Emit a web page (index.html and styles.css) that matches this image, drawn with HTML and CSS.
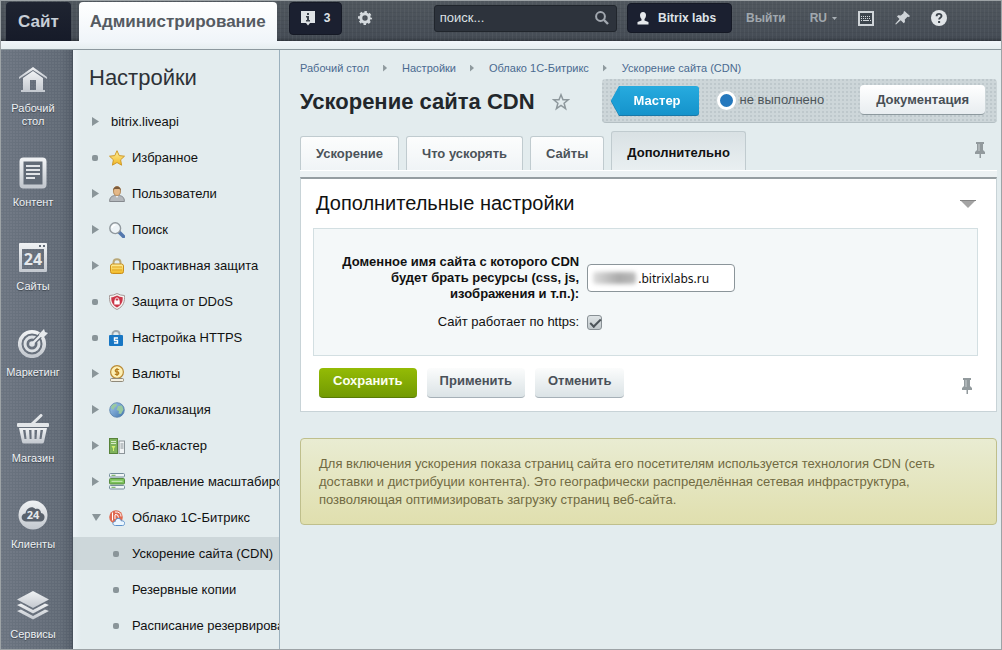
FILE: index.html
```
<!DOCTYPE html>
<html lang="ru">
<head>
<meta charset="utf-8">
<meta name="viewport" content="width=device-width, initial-scale=1">
<title>Ускорение сайта CDN</title>
<link rel="stylesheet" href="styles.css">
</head>
<body>
<svg class="defs" aria-hidden="true">
  <defs>
    <linearGradient id="metal" x1="0" y1="0" x2="0" y2="1"><stop offset="0" stop-color="#f0f2f4"/><stop offset="1" stop-color="#c3c8cf"/></linearGradient>
    <linearGradient id="gold" x1="0" y1="0" x2="0" y2="1"><stop offset="0" stop-color="#fff2a0"/><stop offset="1" stop-color="#f0b51f"/></linearGradient>
    <linearGradient id="globe" x1="0" y1="0" x2="1" y2="1"><stop offset="0" stop-color="#a8cbee"/><stop offset="1" stop-color="#3f74ad"/></linearGradient>
    <symbol id="pin" viewBox="0 0 10 17"><path d="M1 0h8v2H8v6l2 2v2H6v4H4.500v-4H0v-2l2-2V2H1z" fill="#929a9d"/><path d="M4 2v7" stroke="#c9cfd1"/></symbol>
  </defs>
</svg>
<header class="topbar">
  <nav class="modes">
    <a class="mode" href="#">Сайт</a>
    <a class="mode mode--active" href="#">Администрирование</a>
  </nav>
  <button class="dark-btn notices" type="button" aria-label="Уведомления">
    <svg width="14" height="15" viewBox="0 0 14 15"><path d="M0 0h14v12H9l-2 2.500L5 12H0z" fill="#dfe3e6"/><path d="M6 2h2v2H6zM5 5h3v4h1v1.500H5V9h1V6.500H5z" fill="#3c434c"/></svg>
    <span>3</span>
  </button>
  <button class="plain-btn gear" type="button" aria-label="Параметры">
    <svg width="14" height="14" viewBox="0 0 14 14"><circle cx="7" cy="7" r="4.200" fill="none" stroke="#d5dade" stroke-width="3"/><circle cx="7" cy="7" r="6" fill="none" stroke="#d5dade" stroke-width="2" stroke-dasharray="2.500 2.212" stroke-dashoffset="1.250"/></svg>
  </button>
  <form class="search">
    <input class="search-input" type="text" placeholder="поиск..." aria-label="Поиск">
    <button class="plain-btn" type="button" aria-label="Найти">
      <svg width="14" height="14" viewBox="0 0 14 14"><circle cx="5.500" cy="5.500" r="4.400" fill="none" stroke="#a2a8b0" stroke-width="2"/><path d="M9 9l4 4" stroke="#a2a8b0" stroke-width="2.400"/></svg>
    </button>
  </form>
  <a class="dark-btn user" href="#">
    <svg width="12" height="13" viewBox="0 0 12 13"><path d="M6 0c2 0 3 1.500 3 3.200C9 5 8 6.500 7.500 7v1.500L11.500 10v2.500H.5V10l4-1.500V7C4 6.500 3 5 3 3.200 3 1.500 4 0 6 0z" fill="#e6e9ec"/></svg>
    <span>Bitrix labs</span>
  </a>
  <a class="top-link" href="#">Выйти</a>
  <button class="plain-btn lang" type="button" aria-haspopup="true">RU
    <svg width="5" height="3" viewBox="0 0 5 3"><path d="M0 0h5L2.500 3z" fill="#a9b0b6"/></svg>
  </button>
  <div class="top-tools">
    <button class="plain-btn" type="button" aria-label="Горячие клавиши">
      <svg width="16" height="15" viewBox="0 0 16 15"><rect x="1" y="1" width="14" height="13" fill="#3d454d" stroke="#cfd4d8" stroke-width="2"/><path d="M3 5.500h10M3 7.500h10" stroke="#cfd4d8" stroke-dasharray="1 1"/><path d="M3 9.500h1m1 0h6m1 0h1" stroke="#cfd4d8"/></svg>
    </button>
    <button class="plain-btn" type="button" aria-label="Закрепить панель">
      <svg width="15" height="14" viewBox="0 0 15 14"><path d="M9.500 0L15 5l-1 1-1.500-.3L9.800 8.500l.2 2.500-1.300 1.200-3-2.900L1 13.600l-.8-.6L4.500 8 2 5.500 3.200 4.300l2.600.2L8.700 2 8.400.9z" fill="#cfd4d8"/></svg>
    </button>
    <button class="plain-btn" type="button" aria-label="Справка">
      <svg width="16" height="16" viewBox="0 0 16 16"><circle cx="8" cy="8" r="8" fill="#e1e5e8"/><path d="M5.600 6.200C5.600 3 10.500 3.200 10.500 6c0 1.800-2.400 1.800-2.400 3.600" fill="none" stroke="#3b434b" stroke-width="1.900"/><rect x="7.100" y="11" width="2" height="2" fill="#3b434b"/></svg>
    </button>
  </div>
</header>
<div class="workspace">
  <nav class="rail">
    <a class="rail-item rail-item--first" href="#"><span class="rail-icon">
      <svg width="30" height="27" viewBox="0 0 30 27"><path d="M1 13v-2L15 1l14 10v2L15 4z" fill="url(#metal)"/><path fill-rule="evenodd" d="M15 5l10 7v12h2v2H3v-2h2V12zM12 14v10h6V14z" fill="url(#metal)"/></svg></span>Рабочий<br>стол</a>
    <a class="rail-item rail-item--short" href="#"><span class="rail-icon">
      <svg width="28" height="32" viewBox="0 0 28 32"><rect x="2.500" y="2.500" width="23" height="27" rx="2" fill="#626b77" stroke="url(#metal)" stroke-width="4"/><path d="M7 9h14M7 13h14M7 17h14M7 21h9" stroke="#e1e4e8" stroke-width="2"/></svg></span>Контент</a>
    <a class="rail-item" href="#"><span class="rail-icon">
      <svg width="28" height="29" viewBox="0 0 28 29"><path fill-rule="evenodd" d="M1 0h26q1 0 1 1v27q0 1-1 1H1q-1 0-1-1V1q0-1 1-1zM3 6v20h22V6z" fill="url(#metal)"/><path d="M20 2h2v2h-2zM24 2h2v2h-2z" fill="#626b77"/><text class="icon-num" x="14" y="22" font-size="16">24</text></svg></span>Сайты</a>
    <a class="rail-item" href="#"><span class="rail-icon">
      <svg width="30" height="30" viewBox="0 0 30 30"><circle cx="14" cy="16" r="12.300" fill="none" stroke="url(#metal)" stroke-width="3.600"/><circle cx="14" cy="16" r="7" fill="none" stroke="#dde1e5" stroke-width="3"/><circle cx="14" cy="16" r="2.800" fill="#dde1e5"/><path d="M17 13L26 4" stroke="#626b77" stroke-width="5"/><path d="M14 16l9-9" stroke="#e6e9ec" stroke-width="2.400"/><path d="M21 6l5-5 1 3 3 1-5 5-3-1z" fill="#e6e9ec"/></svg></span>Маркетинг</a>
    <a class="rail-item" href="#"><span class="rail-icon">
      <svg width="32" height="30" viewBox="0 0 32 30"><path d="M15 10l9-8.500" stroke="#e3e6e9" stroke-width="3" stroke-linecap="round"/><rect x="0" y="9" width="32" height="4" rx="1" fill="#e3e6e9"/><path fill-rule="evenodd" d="M2 14h28l-3 14q-.4 1.500-2 1.500H7q-1.600 0-2-1.500zM6 16l1.500 9h2L8.500 16zM12 16l.6 9h2L14.500 16zM17.500 16v9h2l.6-9zM23.500 16l-1 9h2L26 16z" fill="url(#metal)"/></svg></span>Магазин</a>
    <a class="rail-item rail-item--tall" href="#"><span class="rail-icon">
      <svg width="30" height="30" viewBox="0 0 30 30"><circle cx="15" cy="15" r="14.500" fill="url(#metal)"/><path d="M8 21.500c-6-.5-5.500-8-.5-8C8 8 14 5 17.500 9c3.500-1 5.500 1.500 5.500 4 5 .5 4.500 8 0 8.500z" fill="#59616c"/><text class="icon-num" x="15" y="19" font-size="11">24</text></svg></span>Клиенты</a>
    <a class="rail-item" href="#"><span class="rail-icon">
      <svg width="32" height="29" viewBox="0 0 32 29"><path d="M16 0l16 8.500L16 17 0 8.500z" fill="url(#metal)"/><path d="M0 14l4-1.500L16 19l12-6.500 4 1.500-16 8.500zM0 20l4-1.500L16 25l12-6.500 4 1.500-16 8.500z" fill="url(#metal)"/></svg></span>Сервисы</a>
  </nav>
  <aside class="menu">
    <h2 class="menu-title">Настройки</h2>
    <ul class="menu-list">
      <li><a class="menu-item" href="#"><i class="mark mark--right"></i><span class="menu-text--plain">bitrix.liveapi</span></a></li>
      <li><a class="menu-item" href="#"><i class="mark mark--dot"></i><svg class="menu-icon" viewBox="0 0 16 16"><path d="M8 .7l2.200 4.900 5.300.6-3.900 3.600 1 5.400L8 12.500l-4.600 2.700 1-5.400L.5 6.200l5.300-.6z" fill="url(#gold)" stroke="#cf9a2b"/></svg><span>Избранное</span></a></li>
      <li><a class="menu-item" href="#"><i class="mark mark--right"></i><svg class="menu-icon" viewBox="0 0 16 16"><path d="M.6 15.500c0-4 2-5.500 5-6h4.800c3 .5 5 2 5 6z" fill="#b4b8bc" stroke="#85898e"/><path d="M6 8.500L8 12l2-3.500z" fill="#f5f5f5"/><ellipse cx="8" cy="5" rx="3.500" ry="4.500" fill="#e4b888" stroke="#a67946" stroke-width=".8"/><path d="M4.300 4.500C3.800-.8 12.200-.8 11.700 4.500L10.500 3h-5z" fill="#7b5b3c"/></svg><span>Пользователи</span></a></li>
      <li><a class="menu-item" href="#"><i class="mark mark--right"></i><svg class="menu-icon" viewBox="0 0 16 16"><path d="M10 10l4.500 4.500" stroke="#5478ae" stroke-width="3.600" stroke-linecap="round"/><circle cx="6.200" cy="6.200" r="5.400" fill="#eef4f7" stroke="#91999e" stroke-width="1.400"/><path d="M3 6q.5-3 3.500-3" stroke="#fff" fill="none" stroke-width="1.500"/></svg><span>Поиск</span></a></li>
      <li><a class="menu-item" href="#"><i class="mark mark--right"></i><svg class="menu-icon" viewBox="0 0 16 16"><path d="M4.500 7V4.500C4.500 0 11.500 0 11.500 4.500V7" fill="none" stroke="#b9a878" stroke-width="2"/><rect x="1.500" y="6" width="13" height="9.500" rx="2" fill="url(#gold)" stroke="#c98e1c"/><path d="M3 9h10M3 12h10" stroke="#e2a21b"/></svg><span>Проактивная защита</span></a></li>
      <li><a class="menu-item" href="#"><i class="mark mark--dot"></i><svg class="menu-icon menu-icon--tall" viewBox="0 0 16 17"><path d="M8 .5q3.500 2 7.500 2c.3 6-.8 11-7.500 14C1.300 13.500.2 8.500.5 2.500Q4.500 2.500 8 .5z" fill="#f6f1ef" stroke="#a69998"/><path d="M8 2.500q2.500 1.500 5.700 1.800c.2 4.500-1 7.700-5.700 10.200C3.300 12 2.100 8.800 2.300 4.300 5.500 4 8 2.500 8 2.500z" fill="#cb3648"/><path d="M6.300 8V6.500c0-2 3.400-2 3.400 0V8" fill="none" stroke="#fff"/><rect x="5.300" y="7.500" width="5.400" height="4" fill="#fff"/></svg><span>Защита от DDoS</span></a></li>
      <li><a class="menu-item" href="#"><i class="mark mark--dot"></i><svg class="menu-icon menu-icon--narrow" viewBox="0 0 14 16"><path d="M3.500 6V4C3.500 0 10.500 0 10.500 4v2" fill="none" stroke="#9da7ad" stroke-width="1.800"/><rect x="0" y="5" width="14" height="11" rx="1" fill="#1877c4"/><path d="M9 8H5.500v2.500h3V13H5" fill="none" stroke="#fff" stroke-width="1.400"/></svg><span>Настройка HTTPS</span></a></li>
      <li><a class="menu-item" href="#"><i class="mark mark--right"></i><svg class="menu-icon menu-icon--tall" viewBox="0 0 16 17"><circle cx="8" cy="7" r="6.400" fill="#fdf0b5" stroke="#b98a35" stroke-width="1.200"/><path d="M10.200 4.500H7q-1.500 1.200 0 2.400h2q1.500 1.300 0 2.500H5.800M8 3v8" fill="none" stroke="#b57b1a" stroke-width="1.200"/><rect x="1.500" y="13.500" width="13" height="3" rx="1" fill="#f4efdf" stroke="#8f8979"/></svg><span>Валюты</span></a></li>
      <li><a class="menu-item" href="#"><i class="mark mark--right"></i><svg class="menu-icon" viewBox="0 0 16 16"><circle cx="8" cy="8" r="7.300" fill="url(#globe)" stroke="#567fa9" stroke-width=".8"/><path d="M3 3l4-1.500 1 2L5 6l-.5 2L2 6zM9 4l4-.5 1.500 4L12 12l-2.500-.5L10 9 7.500 8z" fill="#98c9a0"/></svg><span>Локализация</span></a></li>
      <li><a class="menu-item" href="#"><i class="mark mark--right"></i><svg class="menu-icon" viewBox="0 0 16 16"><rect x=".5" y=".5" width="8" height="15" fill="#7fb25c" stroke="#578339"/><path d="M2 3.500h5M2 5.500h5" stroke="#d7eac8"/><path d="M2.500 8h4L5 10.500V13H4v-2.500z" fill="#d4f06c"/><rect x="10" y="3" width="5.500" height="12.500" fill="#f0f3f4" stroke="#8b9498"/><path d="M11.500 6h3M11.500 8h3M11.500 10h3" stroke="#8b9498"/></svg><span>Веб-кластер</span></a></li>
      <li><a class="menu-item" href="#"><i class="mark mark--right"></i><svg class="menu-icon menu-icon--tall" viewBox="0 0 16 17"><rect x=".5" y=".5" width="15" height="3.500" rx="1" fill="#f1f6f7" stroke="#748d9b"/><rect x=".5" y="5.500" width="15" height="5.500" rx="1" fill="#7cc35a" stroke="#598c42"/><rect x=".5" y="12.500" width="15" height="3.500" rx="1" fill="#f1f6f7" stroke="#748d9b"/><path d="M2.500 2.300h4M2.500 14.300h4" stroke="#6caa53"/><path d="M2.500 8.300h11" stroke="#d3efc3"/></svg><span>Управление масштабированием</span></a></li>
      <li><a class="menu-item" href="#"><i class="mark mark--down"></i><svg class="menu-icon" viewBox="0 0 16 16"><circle cx="7" cy="7" r="6.800" fill="#e06a50"/><path d="M3.500 2.500v8M6 5v4M6 4.500q3.500-.5 3.500 3M6 2q6-.5 6 4.500" fill="none" stroke="#fff"/><path d="M6.500 15.500c-3.500 0-3.300-4-.3-4 .3-4 5.300-4 6-.7 4.500-.3 4.300 4.700 1.300 4.700z" fill="#eaf6ff" stroke="#5c91ca"/></svg><span>Облако 1С-Битрикс</span></a></li>
      <li><a class="menu-item menu-item--sub menu-item--current" href="#"><i class="mark mark--dot"></i><span>Ускорение сайта (CDN)</span></a></li>
      <li><a class="menu-item menu-item--sub" href="#"><i class="mark mark--dot"></i><span>Резервные копии</span></a></li>
      <li><a class="menu-item menu-item--sub" href="#"><i class="mark mark--dot"></i><span>Расписание резервирования</span></a></li>
    </ul>
  </aside>
  <main class="content">
    <nav class="crumbs">
      <a href="#">Рабочий стол</a><i class="crumb-sep"></i><a href="#">Настройки</a><i class="crumb-sep"></i><a href="#">Облако 1С-Битрикс</a><i class="crumb-sep"></i><a href="#">Ускорение сайта (CDN)</a>
    </nav>
    <div class="heading">
      <h1 class="page-title">Ускорение сайта CDN</h1>
      <button class="plain-btn fav" type="button" aria-label="Добавить в избранное">
        <svg width="18" height="18" viewBox="0 0 18 18"><path d="M9 1.800l2 5h5.200l-4.100 3.400 1.500 5.500L9 12.500l-4.600 3.200 1.500-5.500L1.800 6.800H7z" fill="none" stroke="#8e989c" stroke-width="1.500"/></svg>
      </button>
      <div class="wizard">
        <a class="wizard-btn" href="#"><svg width="9" height="29" viewBox="0 0 9 29"><path d="M9 0H8L0 14.500 8 29h1z" fill="#1c9fd6"/></svg><span>Мастер</span></a>
        <label class="status"><input class="status-radio" type="radio" checked>не выполнено</label>
        <a class="doc-btn" href="#">Документация</a>
      </div>
    </div>
    <div class="tabs">
      <button class="tab" type="button">Ускорение</button>
      <button class="tab" type="button">Что ускорять</button>
      <button class="tab" type="button">Сайты</button>
      <button class="tab tab--active" type="button">Дополнительно</button>
      <button class="plain-btn tabs-pin" type="button" aria-label="Закрепить вкладки"><svg width="10" height="17"><use href="#pin"/></svg></button>
    </div>
    <form class="card">
      <div class="card-head">
        <h2 class="card-title">Дополнительные настройки</h2>
        <button class="plain-btn" type="button" aria-label="Свернуть"><svg width="16" height="8" viewBox="0 0 16 8"><path d="M0 0h16L8 8z" fill="#a4a4a4"/><path d="M0 .5h16" stroke="#858585"/></svg></button>
      </div>
      <div class="fields">
        <label class="field-label field-label--strong" for="domain">Доменное имя сайта с которого CDN будет брать ресурсы (css, js, изображения и т.п.):</label>
        <div class="domain"><input class="domain-input" id="domain" type="text" value=".bitrixlabs.ru"><span class="smudge"></span></div>
        <label class="field-label" for="https">Сайт работает по https:</label>
        <input class="check" id="https" type="checkbox" checked>
      </div>
      <div class="actions">
        <button class="btn btn--save" type="button">Сохранить</button>
        <button class="btn" type="button">Применить</button>
        <button class="btn" type="button">Отменить</button>
        <button class="plain-btn actions-pin" type="button" aria-label="Закрепить кнопки"><svg width="10" height="17"><use href="#pin"/></svg></button>
      </div>
    </form>
    <p class="note">Для включения ускорения показа страниц сайта его посетителям используется технология CDN (сеть доставки и дистрибуции контента). Это географически распределённая сетевая инфраструктура, позволяющая оптимизировать загрузку страниц веб-сайта.</p>
  </main>
</div>
</body>
</html>
```
FILE: styles.css
```
* { box-sizing: border-box; }
body {
  margin: 0;
  height: 100vh;
  display: flex;
  flex-direction: column;
  overflow: hidden;
  border: 1px solid #9da3a6;
  background: #e3ecee;
  color: #111;
  font: 13px/16px "Liberation Sans", Arial, sans-serif;
}
a { color: inherit; text-decoration: none; }
button, input { font: inherit; }
svg { display: block; flex: none; }
.defs { position: absolute; width: 0; height: 0; }
.plain-btn { padding: 0; border: 0; background: none; color: inherit; cursor: pointer; }

/* Top bar */
.topbar {
  flex: none;
  display: flex;
  align-items: center;
  height: 49px;
  padding: 0 54px 14px 5px;
  border-bottom: 1px solid #8c989e;
  background:
    linear-gradient(#f1f6fa, #e6eef0) bottom / 100% 8px no-repeat,
    repeating-linear-gradient(90deg, transparent 0 3px, rgba(255, 255, 255, 0.04) 3px 4px),
    repeating-linear-gradient(transparent 0 3px, rgba(0, 0, 0, 0.05) 3px 4px),
    linear-gradient(#50575e, #464d56 36px, #32383f 40px);
}
.modes { display: flex; align-self: stretch; gap: 8px; margin-bottom: -6px; padding-top: 1px; font-size: 17px; font-weight: bold; }
.mode {
  display: flex;
  align-items: center;
  padding: 0 12px;
  border-radius: 4px 4px 0 0;
  background: linear-gradient(#1f2431, #161b29);
  color: #c8cfd7;
}
.mode--active { padding: 0 11px; background: linear-gradient(#fff, #f0f5f9); color: #555b62; }
.dark-btn {
  flex: none;
  display: flex;
  align-items: center;
  height: 30px;
  border: 1px solid #151925;
  border-radius: 4px;
  background: #1b2030;
  color: #dfe3e8;
  font-size: 12px;
  font-weight: bold;
  white-space: nowrap;
}
.notices { gap: 9px; width: 53px; height: 33px; margin-left: 12px; padding: 0 11px; }
.gear { margin-left: 16px; }
.search {
  flex: 1;
  min-width: 0;
  display: flex;
  align-items: center;
  height: 27px;
  margin-left: 62px;
  padding: 0 7px 0 5px;
  border: 1px solid #20252c;
  border-radius: 3px;
  background: #2d333c;
}
.search-input { flex: 1; min-width: 0; padding: 0; border: 0; background: none; color: #dde1e5; font-size: 13px; outline: 0; }
.search-input::placeholder { color: #dde1e5; opacity: 1; }
.user { gap: 9px; margin-left: 10px; padding: 0 15px 0 9px; }
.top-link { margin-left: 14px; color: #a1a8ae; font-size: 12px; font-weight: bold; }
.lang { display: flex; align-items: center; gap: 5px; margin-left: 24px; color: #a1a8ae; font-size: 12px; font-weight: bold; }
.top-tools { display: flex; align-items: center; gap: 21px; margin-left: 21px; }

/* Columns */
.workspace { flex: 1; min-height: 0; display: flex; }
.rail {
  flex: none;
  width: 72px;
  padding-top: 13px;
  background:
    radial-gradient(circle at 1px 1px, rgba(255, 255, 255, 0.05) 1px, transparent 1px) 0 0 / 3px 3px,
    linear-gradient(90deg, #6b7480, #606975 60px, #555e6a 70px, #464e59);
  color: #eef1f4;
  font-size: 11px;
  line-height: 13px;
  text-align: center;
  text-shadow: 0 1px 1px #3d444d;
  overflow: hidden;
}
.rail-item { display: block; min-height: 86px; padding-right: 8px; }
.rail-item--first { min-height: 94px; }
.rail-item--short { min-height: 84px; }
.rail-item--tall { min-height: 90px; }
.rail-icon { display: flex; align-items: center; justify-content: center; height: 32px; margin-bottom: 7px; }
.icon-num { fill: #e6e9ec; font-family: "Open Sans", sans-serif; font-weight: bold; text-anchor: middle; text-shadow: none; }

.menu {
  flex: none;
  width: 207px;
  padding-top: 16px;
  border-right: 1px solid #9bb0bd;
  background: linear-gradient(90deg, #edf3f7, #e3ecee 8px);
  overflow: hidden;
}
.menu-title { margin: 0 0 15px 16px; color: #2d3237; font-size: 22px; font-weight: normal; line-height: 24px; }
.menu-list { display: flex; flex-direction: column; gap: 3px; margin: 0; padding: 0; list-style: none; }
.menu-item { display: flex; align-items: center; height: 33px; padding-left: 19px; white-space: nowrap; }
.menu-item--sub { padding-left: 40px; }
.menu-item--current { background: #cdd7da; }
.menu-icon { width: 16px; height: 16px; margin-right: 7px; }
.menu-icon--tall { height: 17px; }
.menu-icon--narrow { width: 14px; margin-right: 9px; }
.menu-text--plain { padding-left: 2px; }
.mark { flex: none; width: 17px; height: 7px; background: #8a9599; }
.mark--right { clip-path: polygon(0 0, 7px 50%, 0 100%); height: 9px; }
.mark--down { clip-path: polygon(0 0, 9px 0, 4px 100%); }
.mark--dot { width: 6px; height: 6px; margin-right: 11px; border-radius: 2px; }
.menu-item--sub .mark { margin-right: 13px; }

.content { flex: 1; min-width: 0; padding: 11px 4px 0 20px; }
.crumbs { display: flex; align-items: center; height: 14px; color: #4a6a90; font-size: 11px; line-height: 14px; white-space: nowrap; }
.crumb-sep { width: 4px; height: 7px; margin: 0 15px 0 14px; background: #8f9a9e; clip-path: polygon(0 0, 100% 50%, 0 100%); }

.heading { display: flex; align-items: center; margin-top: 4px; }
.page-title { margin: 0; padding-top: 2px; color: #22272b; font-size: 22px; line-height: 26px; white-space: nowrap; }
.fav { margin-left: 17px; padding-top: 2px; }
.wizard {
  flex: 1;
  display: flex;
  align-items: center;
  height: 44px;
  margin-left: 32px;
  padding: 0 12px 1px 9px;
  border-bottom: 1px solid #b4bfc3;
  border-radius: 4px;
  background: radial-gradient(circle at 1px 1px, #bec8cc 1px, transparent 1px) 0 0 / 4px 4px, #cdd6d9;
}
.wizard-btn { display: flex; height: 29px; color: #fff; font-weight: bold; line-height: 29px; filter: drop-shadow(0 1px 0 #1878a8); }
.wizard-btn span { padding: 0 18px 0 14px; border-radius: 0 3px 3px 0; background: linear-gradient(#27abdf, #1593cb); }
.status { display: flex; align-items: center; gap: 4px; margin-left: 18px; color: #4d5559; white-space: nowrap; }
.status-radio { appearance: none; width: 19px; height: 19px; margin: 0; border: 3px solid #fff; border-radius: 50%; background: #2478bd; }
.doc-btn {
  height: 30px;
  margin-left: auto;
  padding: 0 16px;
  border-bottom: 1px solid #8d999e;
  border-radius: 4px;
  background: linear-gradient(#fff, #e8edf0);
  color: #484f55;
  font-weight: bold;
  line-height: 29px;
}

/* Tabs */
.tabs {
  display: flex;
  align-items: flex-end;
  gap: 7px;
  height: 54px;
  padding-bottom: 7px;
  background: linear-gradient(#fff 0 1px, #ecf1f3 1px) bottom / 100% 7px no-repeat;
}
.tab {
  height: 34px;
  padding: 0 15px;
  border: 1px solid #c0cbcf;
  border-bottom: 0;
  border-radius: 3px 3px 0 0;
  background: linear-gradient(#fcfdfd, #f0f4f6);
  color: #4b5359;
  font-weight: bold;
  cursor: pointer;
}
.tab--active { height: 39px; padding-top: 4px; background: linear-gradient(#d9e1e4, #e9eff1); color: #111; }
.tabs-pin { margin-left: auto; padding: 0 12px 11px 0; }

/* Form card */
.card { border: 1px solid #c8d3d7; border-top: 2px solid #959da1; background: #fff; }
.card-head { display: flex; align-items: center; justify-content: space-between; height: 49px; padding: 0 20px 0 15px; }
.card-title { margin: 0; padding-bottom: 2px; color: #111; font-size: 20px; font-weight: normal; }
.fields {
  display: grid;
  grid-template-columns: 40% 1fr;
  align-items: center;
  gap: 12px 8px;
  margin: 0 18px 0 12px;
  padding: 25px 0;
  border: 1px solid #d3dfe2;
  background: #f4f8f9;
}
.field-label { justify-self: end; max-width: 250px; text-align: right; }
.field-label--strong { font-weight: bold; }
.domain { position: relative; width: 148px; }
.domain-input {
  display: block;
  width: 100%;
  height: 28px;
  padding: 0 4px 0 50px;
  border: 1px solid #8b959a;
  border-radius: 4px;
  background: #fff;
  color: #111;
  font: 12px "Noto Sans", sans-serif;
}
.smudge { position: absolute; left: 6px; top: 8px; width: 43px; height: 12px; border-radius: 3px; background: linear-gradient(90deg, #ddd, #aaa 60%, #bbb); filter: blur(2px); }
.check {
  appearance: none;
  width: 15px;
  height: 15px;
  margin: 0;
  border: 1px solid #889095;
  border-radius: 3px;
  background: linear-gradient(#dfe4e6, #bfc7ca);
}
.check:checked::before { content: ""; display: block; width: 9px; height: 4px; margin: 3px 2px; border: solid #4c5459; border-width: 0 0 2px 2px; rotate: -45deg; }
.actions { display: flex; align-items: flex-start; gap: 10px; padding: 12px 24px 13px 18px; }
.btn {
  height: 30px;
  padding: 0 13px 3px;
  border: 0;
  border-bottom: 1px solid #a6b0b7;
  border-radius: 4px;
  background: linear-gradient(#fbfcfc, #dbe3e6);
  color: #4a5158;
  font-weight: bold;
  cursor: pointer;
}
.btn--save { padding: 0 14px 3px; border-bottom-color: #587b05; background: linear-gradient(#94bb05, #729a03); color: #fcfff0; }
.actions-pin { margin-left: auto; padding-top: 10px; }

.note {
  margin: 26px 0 0;
  padding: 16px 40px 15px 18px;
  border: 1px solid #bfbf8c;
  border-radius: 4px;
  background: linear-gradient(#e9ecd2, #e0dfae);
  color: #716a42;
  line-height: 18px;
}
```
